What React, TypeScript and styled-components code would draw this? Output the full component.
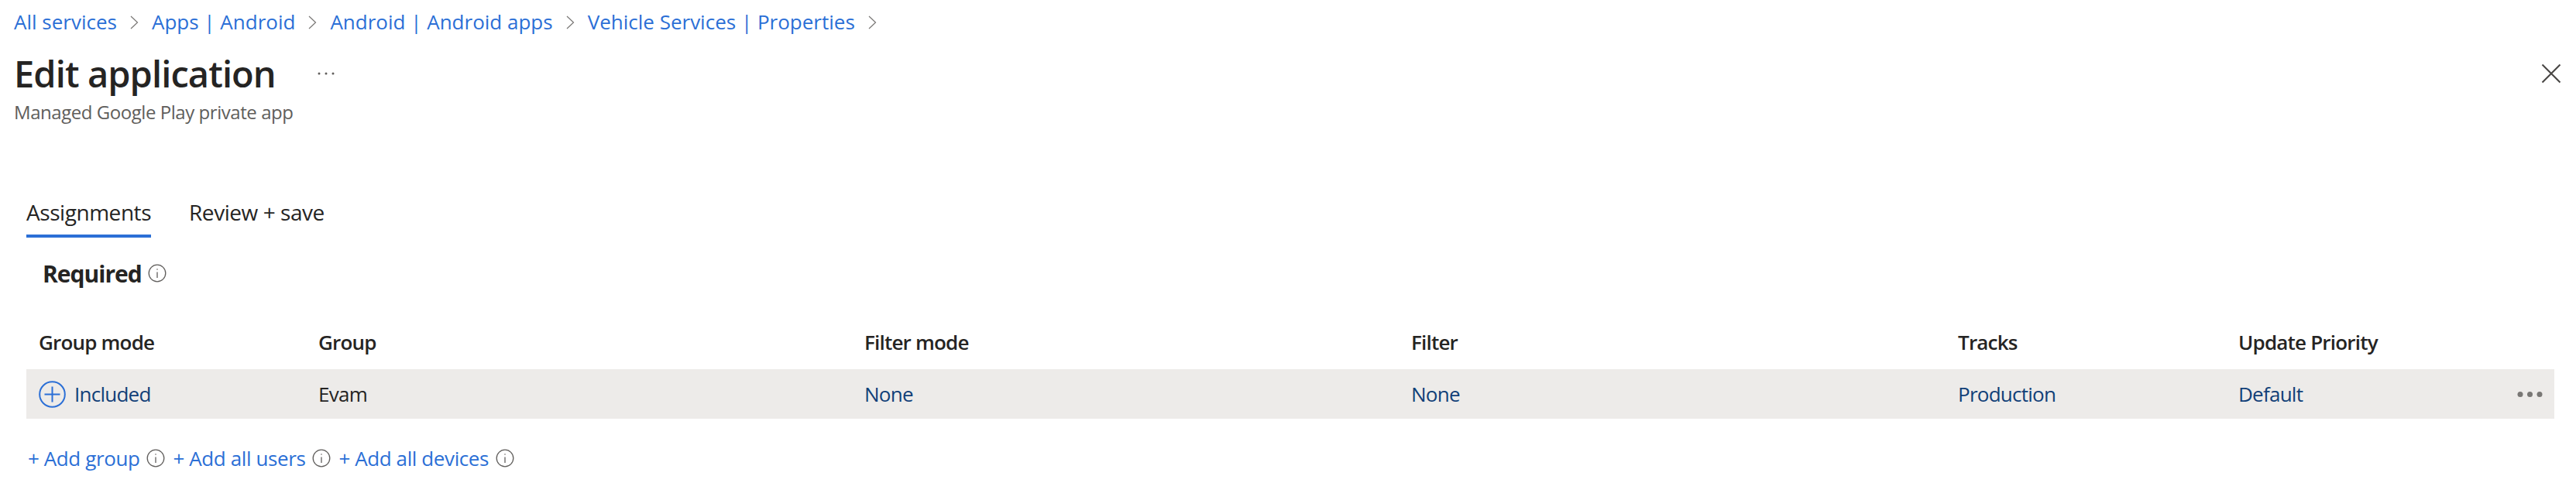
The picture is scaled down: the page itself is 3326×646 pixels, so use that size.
import styled, { createGlobalStyle } from "styled-components";

const GlobalStyle = createGlobalStyle`
  html, body {
    margin: 0;
    padding: 0;
    background: #fff;
    font-family: "Open Sans", "Noto Sans", sans-serif;
    color: #252423;
  }
`;

const Page = styled.div`
  width: 3326px;
  height: 646px;
  overflow: hidden;
  box-sizing: border-box;
  padding: 10px 28px 0 18px;
`;

const Breadcrumbs = styled.nav`
  display: flex;
  align-items: center;
  height: 36px;
`;

const Crumb = styled.a`
  font-size: 26px;
  letter-spacing: 0;
  color: #2b6fd6;
  white-space: nowrap;
`;

const CrumbChevron = styled.svg`
  width: 11px;
  height: 18px;
  margin: 2px 17px 0 17px;
  flex: none;
`;

const TitleRow = styled.div`
  display: flex;
  align-items: center;
  justify-content: space-between;
  margin-top: 22px;
  height: 54px;
`;

const TitleLeft = styled.div`
  display: flex;
  align-items: center;
`;

const Title = styled.h1`
  margin: 0;
  font-size: 47px;
  font-weight: 600;
  letter-spacing: -0.9px;
  line-height: 54px;
  color: #252423;
`;

const MoreDots = styled.svg`
  width: 22px;
  height: 4px;
  margin-left: 54px;
`;

const CloseIcon = styled.svg`
  width: 26px;
  height: 26px;
  margin-right: -9px;
`;

const Subtitle = styled.div`
  font-size: 24px;
  letter-spacing: -0.45px;
  line-height: 32px;
  color: #605e5c;
  margin-top: 7px;
`;

const Body = styled.div`
  padding: 0 0 0 16px;
`;

const Tabs = styled.div`
  display: flex;
  gap: 49px;
  margin-top: 86px;
`;

const Tab = styled.div<{ $active?: boolean }>`
  font-size: 28px;
  line-height: 38px;
  letter-spacing: -0.45px;
  height: 60px;
  box-sizing: border-box;
  padding-top: 8px;
  font-weight: ${(p) => (p.$active ? 500 : 400)};
  border-bottom: 4px solid ${(p) => (p.$active ? "#2b6fd6" : "transparent")};
  color: #252423;
`;

const SectionHead = styled.div`
  display: flex;
  align-items: center;
  gap: 8px;
  margin: 26px 0 0 21px;
  height: 40px;
`;

const SectionTitle = styled.h2`
  margin: 0;
  font-size: 30px;
  font-weight: 700;
  letter-spacing: -1px;
  color: #252423;
`;

const Info = styled.svg`
  width: 24px;
  height: 24px;
  flex: none;
`;

const Grid = styled.div`
  display: grid;
  grid-template-columns: 361px 705px 706px 706px 362px 1fr;
  align-items: center;
  padding-left: 16px;
`;

const HeaderRow = styled(Grid)`
  height: 70px;
  margin-top: 34px;
`;

const HeaderCell = styled.div`
  font-size: 26px;
  font-weight: 600;
  letter-spacing: -0.8px;
  color: #252423;
`;

const DataRow = styled(Grid)`
  height: 64px;
  background: #edebe9;
  position: relative;
`;

const Cell = styled.div<{ $link?: boolean }>`
  font-size: 26px;
  letter-spacing: -0.75px;
  color: ${(p) => (p.$link ? "#114078" : "#252423")};
`;

const ModeCell = styled(Cell)`
  display: flex;
  align-items: center;
  gap: 11px;
`;

const RowMenu = styled.svg`
  position: absolute;
  right: 15px;
  top: 28px;
  width: 33px;
  height: 9px;
`;

const Actions = styled.div`
  display: flex;
  align-items: center;
  height: 40px;
  margin-top: 31px;
  padding-left: 2px;
`;

const AddLink = styled.a`
  font-size: 26px;
  letter-spacing: -0.4px;
  color: #2b6fd6;
  white-space: nowrap;
`;

const ActionInfo = styled(Info)`
  margin: 0 10px 0 9px;
`;

const crumbs = [
  "All services",
  "Apps | Android",
  "Android | Android apps",
  "Vehicle Services | Properties",
];

const columns = [
  "Group mode",
  "Group",
  "Filter mode",
  "Filter",
  "Tracks",
  "Update Priority",
];

const addLinks = ["+ Add group", "+ Add all users", "+ Add all devices"];

const InfoIcon = ({ as }: { as?: typeof Info }) => {
  const Comp = as ?? Info;
  return (
    <Comp viewBox="0 0 24 24" fill="none" stroke="#605e5c" strokeWidth="1.3">
      <circle cx="12" cy="12" r="10.8" />
      <path d="M12 10.5v7.5" />
      <circle cx="12" cy="7" r="0.8" fill="#605e5c" stroke="none" />
    </Comp>
  );
};

export default function App() {
  return (
    <Page>
      <GlobalStyle />
      <Breadcrumbs>
        {crumbs.map((c) => (
          <span key={c} style={{ display: "contents" }}>
            <Crumb>{c}</Crumb>
            <CrumbChevron viewBox="0 0 11 18" fill="none" stroke="#797775" strokeWidth="1.2">
              <path d="M1 1l8.5 8L1 17" />
            </CrumbChevron>
          </span>
        ))}
      </Breadcrumbs>
      <TitleRow>
        <TitleLeft>
          <Title>Edit application</Title>
          <MoreDots viewBox="0 0 22 4" fill="#605e5c">
            <circle cx="2" cy="2" r="1.5" />
            <circle cx="11" cy="2" r="1.5" />
            <circle cx="20" cy="2" r="1.5" />
          </MoreDots>
        </TitleLeft>
        <CloseIcon viewBox="0 0 26 26" fill="none" stroke="#484644" strokeWidth="2">
          <path d="M1.5 1.5l23 23M24.5 1.5l-23 23" />
        </CloseIcon>
      </TitleRow>
      <Subtitle>Managed Google Play private app</Subtitle>
      <Body>
        <Tabs>
          <Tab $active>Assignments</Tab>
          <Tab>Review + save</Tab>
        </Tabs>
        <SectionHead>
          <SectionTitle>Required</SectionTitle>
          <InfoIcon />
        </SectionHead>
        <HeaderRow>
          {columns.map((c) => (
            <HeaderCell key={c}>{c}</HeaderCell>
          ))}
        </HeaderRow>
        <DataRow>
          <ModeCell $link>
            <svg width="35" height="35" viewBox="0 0 35 35" fill="none" stroke="#2b6fd6" strokeWidth="2">
              <circle cx="17.5" cy="17.5" r="16.3" />
              <path d="M17.5 7.5v20M7.5 17.5h20" />
            </svg>
            Included
          </ModeCell>
          <Cell>Evam</Cell>
          <Cell $link>None</Cell>
          <Cell $link>None</Cell>
          <Cell $link>Production</Cell>
          <Cell $link>Default</Cell>
          <RowMenu viewBox="0 0 33 9" fill="#797775">
            <circle cx="4" cy="4.5" r="3.5" />
            <circle cx="16.5" cy="4.5" r="3.5" />
            <circle cx="29" cy="4.5" r="3.5" />
          </RowMenu>
        </DataRow>
        <Actions>
          {addLinks.map((l) => (
            <span key={l} style={{ display: "contents" }}>
              <AddLink>{l}</AddLink>
              <InfoIcon as={ActionInfo} />
            </span>
          ))}
        </Actions>
      </Body>
    </Page>
  );
}
